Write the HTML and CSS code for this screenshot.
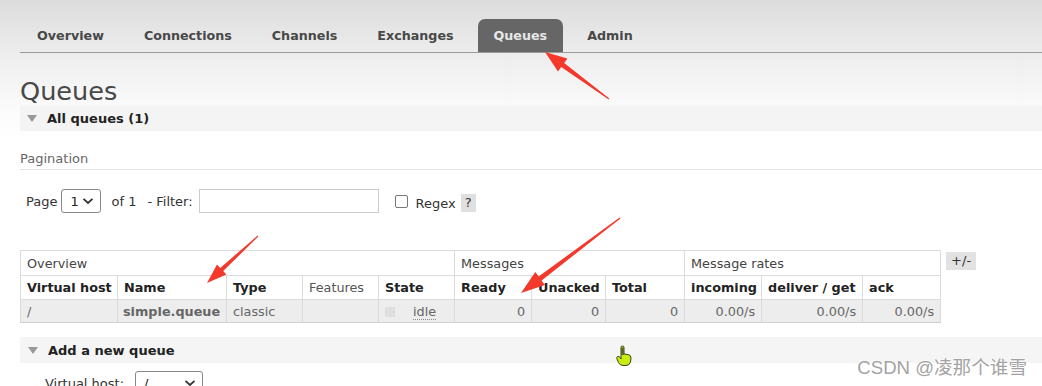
FILE: index.html
```html
<!DOCTYPE html>
<html>
<head>
<meta charset="utf-8">
<link rel="stylesheet" href="styles.css">
</head>
<body>
<div class="page">
  <div class="header">
    <ul class="tabs">
      <li class="tab">Overview</li>
      <li class="tab">Connections</li>
      <li class="tab">Channels</li>
      <li class="tab">Exchanges</li>
      <li class="tab active">Queues</li>
      <li class="tab">Admin</li>
    </ul>
  </div>
  <div class="main">
    <h1 class="title">Queues</h1>
    <div class="section-bar"><span class="tri"></span>All queues (1)</div>
    <h3 class="sub">Pagination</h3>
    <div class="filter-row">
      <span>Page</span>
      <span class="select small"><span>1</span><svg width="12" height="8" viewBox="0 0 12 8"><path d="M1.5 1.8 L6 6 L10.5 1.8" fill="none" stroke="#333" stroke-width="1.8"/></svg></span>
      <span class="of">of 1</span>
      <span class="flt">- Filter:</span>
      <span class="input"></span>
      <span class="check"></span>
      <span class="regex">Regex</span>
      <span class="help">?</span>
    </div>
    <div class="table-row">
      <table class="queues">
        <colgroup>
          <col style="width:97px"><col style="width:109px"><col style="width:76px"><col style="width:76px"><col style="width:76px">
          <col style="width:77px"><col style="width:74px"><col style="width:79px">
          <col style="width:77px"><col style="width:101px"><col style="width:78px">
        </colgroup>
        <tr class="group">
          <th colspan="5">Overview</th>
          <th colspan="3">Messages</th>
          <th colspan="3">Message rates</th>
        </tr>
        <tr class="cols">
          <th>Virtual host</th><th>Name</th><th>Type</th><th class="plain">Features</th><th>State</th>
          <th>Ready</th><th>Unacked</th><th>Total</th>
          <th>incoming</th><th>deliver / get</th><th>ack</th>
        </tr>
        <tr class="data">
          <td class="muted">/</td>
          <td class="name">simple.queue</td>
          <td class="muted">classic</td>
          <td></td>
          <td class="state"><span class="sq"></span><span class="idle">idle</span></td>
          <td class="num">0</td><td class="num">0</td><td class="num">0</td>
          <td class="num">0.00/s</td><td class="num">0.00/s</td><td class="num">0.00/s</td>
        </tr>
      </table>
      <span class="pm">+/-</span>
    </div>
    <div class="section-bar add"><span class="tri"></span>Add a new queue</div>
    <div class="form-row">
      <span class="lbl">Virtual host:</span>
      <span class="select vh"><span>/</span><svg width="12" height="8" viewBox="0 0 12 8"><path d="M1.5 1.8 L6 6 L10.5 1.8" fill="none" stroke="#333" stroke-width="1.8"/></svg></span>
    </div>
  </div>

  <svg class="overlay" width="1042" height="386" viewBox="0 0 1042 386">
    <polygon fill="#f2392b" points="609.3,98.6 564.2,63.0 567.4,58.6 545,52 558.0,71.4 561.2,67.0 608.7,99.4"/>
    <polygon fill="#f2392b" points="258.3,236.4 223.2,271.1 226.4,274.6 207,283 217.0,264.4 220.2,267.9 257.7,235.6"/>
    <polygon fill="#f2392b" points="620.4,218.5 541.6,280.5 544.9,284.9 521,293 535.3,272.1 538.6,276.5 619.6,217.5"/>
    <g transform="translate(616,346)">
      <path d="M5 1.5 Q5 0 6.5 0 Q8 0 8 1.5 L8 8 L12 8.5 Q15 9 15 12 L14.5 16 Q13.5 19.5 10 19.5 L7 19.5 Q4 19.5 2.5 16.5 L0.8 12.5 Q0.3 11 1.6 10.5 Q3 10 4 11.5 L5 13 Z" fill="#c6ec12" stroke="#3a4410" stroke-width="1"/>
      <path d="M5 1.5 L5 9 L8 9 L8 1.5 Z" fill="#5a6a20"/>
    </g>
  </svg>
  <div class="watermark">CSDN @凌那个谁雪</div>
</div>
</body>
</html>
```

FILE: styles.css
```css
* { box-sizing: border-box; }
html, body { margin: 0; padding: 0; }
body {
  width: 1042px;
  height: 386px;
  overflow: hidden;
  font-family: "DejaVu Sans", Verdana, sans-serif;
  font-size: 13px;
  color: #484848;
  background: #fff;
}
.page {
  position: relative;
  width: 1042px;
  height: 386px;
  background: linear-gradient(to bottom, #dcdcdc 0px, #ececec 50px, #fbfbfb 110px, #ffffff 140px);
}
.header { padding: 19px 0 0 20px; }
.tabs {
  list-style: none;
  margin: 0;
  padding: 0 0 0 1px;
  display: flex;
  gap: 8px;
  border-bottom: 1px solid #9a9a9a;
}
.tab {
  height: 33px;
  line-height: 33px;
  padding: 0 16px;
  font-size: 12.7px;
  font-weight: bold;
  color: #484848;
  border-radius: 7px 7px 0 0;
}
.tab.active { background: #666; color: #e8e8e8; }
.main { padding-left: 20px; }
.title {
  margin: 23px 0 0 0;
  font-size: 25.6px;
  line-height: 30px;
  font-weight: normal;
  color: #484848;
  height: 30px;
}
.section-bar {
  height: 25px;
  background: #f4f4f4;
  display: flex;
  align-items: center;
  font-weight: bold;
  color: #222;
  padding-left: 7px;
}
.tri {
  width: 0; height: 0;
  border-left: 5px solid transparent;
  border-right: 5px solid transparent;
  border-top: 7px solid #999;
  margin-right: 10px;
}
.sub {
  margin: 20px 0 0 0;
  font-size: 13px;
  line-height: 16px;
  font-weight: normal;
  color: #666;
  padding-bottom: 2px;
  border-bottom: 1px solid #e4e4e4;
}
.filter-row {
  margin-top: 19px;
  display: flex;
  align-items: center;
  height: 24px;
  padding-left: 6px;
  color: #333;
}
.select {
  display: inline-flex;
  align-items: center;
  justify-content: space-between;
  height: 24px;
  border: 1px solid #888;
  border-radius: 3px;
  background: #fff;
  padding: 0 6px 0 8px;
  color: #222;
}
.select.small { width: 40px; margin-left: 4px; }
.of { margin-left: 10px; }
.flt { margin-left: 11px; }
.input {
  width: 180px;
  height: 24px;
  border: 1px solid #ccc;
  background: #fff;
  margin-left: 6px;
}
.check {
  width: 13px;
  height: 13px;
  border: 1px solid #777;
  border-radius: 2px;
  margin-left: 16px;
  background: #fff;
}
.regex { margin-left: 8px; margin-top: 4px; }
.help {
  margin-left: 5px;
  margin-top: 4px;
  background: #e0e0e0;
  width: 15px;
  height: 18px;
  line-height: 18px;
  text-align: center;
  color: #333;
}
.table-row {
  margin-top: 37px;
  display: flex;
  align-items: flex-start;
}
.queues {
  border-collapse: collapse;
  table-layout: fixed;
  width: 921px;
  font-size: 12.8px;
}
.queues th, .queues td {
  border: 1px solid #dcdcdc;
  padding: 0 6px;
  text-align: left;
  white-space: nowrap;
  overflow: hidden;
}
.queues tr.group th {
  height: 25px;
  font-weight: normal;
  color: #444;
  background: #fff;
}
.queues tr.cols th {
  height: 24px;
  font-weight: bold;
  color: #222;
  background: #fff;
}
.queues tr.cols th.plain { font-weight: normal; color: #555; }
.queues tr.data td {
  height: 23px;
  background: #ededed;
  color: #666;
  border-color: #dadada;
  border-bottom: 1px solid #cfcfcf;
}
.queues td.name { font-weight: bold; color: #222; padding-left: 5px; }
.queues td.num { text-align: right; }
.sq {
  display: inline-block;
  width: 10px;
  height: 10px;
  background: #dedede;
  vertical-align: middle;
  margin-right: 18px;
}
.idle {
  border-bottom: 1px dotted #888;
  color: #666;
  vertical-align: middle;
}
.pm {
  margin-left: 5px;
  margin-top: 2px;
  width: 30px;
  height: 18px;
  line-height: 18px;
  text-align: center;
  background: #e2e2e2;
  color: #333;
}
.section-bar.add {
  margin-top: 14px;
  height: 26px;
  background: #f5f5f5;
  padding-left: 8px;
}
.form-row {
  margin-top: 8px;
  display: flex;
  align-items: center;
  padding-left: 25px;
  color: #333;
}
.select.vh { width: 68px; margin-left: 11px; }
.overlay {
  position: absolute;
  left: 0;
  top: 0;
  pointer-events: none;
}
.watermark {
  position: absolute;
  right: 15px;
  top: 352px;
  font-family: "Liberation Sans", "Noto Sans CJK SC", sans-serif;
  font-size: 18.6px;
  color: #a3a3a3;
  text-shadow: 0 0 2px #fff;
}
```
